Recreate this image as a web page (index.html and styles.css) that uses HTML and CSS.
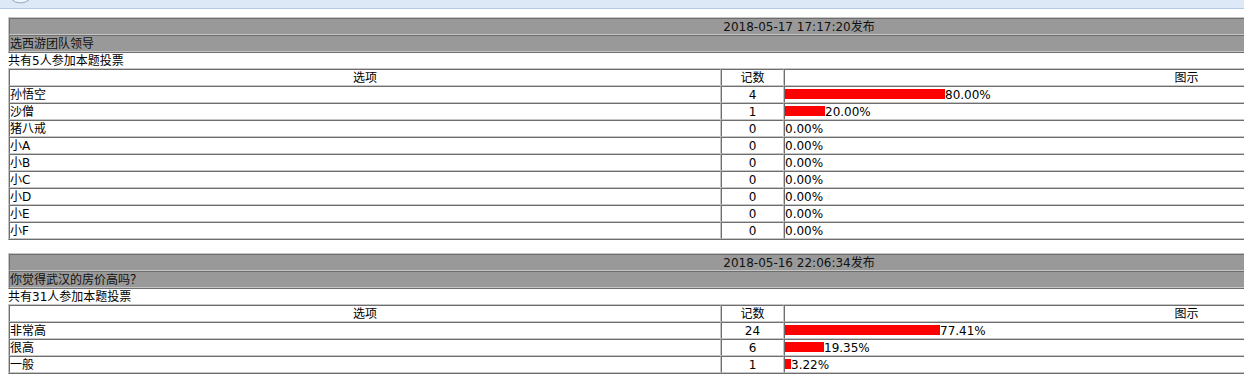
FILE: index.html
```html
<!DOCTYPE html>
<html lang="zh-CN">
<head>
<meta charset="utf-8">
<title>投票结果</title>
<link rel="stylesheet" href="styles.css">
</head>
<body>
<div class="chrome">
  <svg class="chrome-btn" width="44" height="8" viewBox="0 0 44 8" aria-hidden="true">
    <circle cx="20.5" cy="-10" r="13" fill="#eef4fb" stroke="#95a5bb" stroke-width="1"/>
  </svg>
</div>
<div class="page">
  <section class="poll">
    <div class="box">
      <div class="cell head center">2018-05-17 17:17:20发布</div>
      <div class="cell head">选西游团队领导</div>
    </div>
    <div class="total">共有5人参加本题投票</div>
    <div class="box">
      <div class="row">
        <div class="cell center">选项</div>
        <div class="cell center">记数</div>
        <div class="cell center">图示</div>
      </div>
      <div class="row">
        <div class="cell">孙悟空</div>
        <div class="cell center">4</div>
        <div class="cell bar-cell"><span class="bar" style="width:160px"></span><span>80.00%</span></div>
      </div>
      <div class="row">
        <div class="cell">沙僧</div>
        <div class="cell center">1</div>
        <div class="cell bar-cell"><span class="bar" style="width:40px"></span><span>20.00%</span></div>
      </div>
      <div class="row">
        <div class="cell">猪八戒</div>
        <div class="cell center">0</div>
        <div class="cell bar-cell"><span class="bar" style="width:0px"></span><span>0.00%</span></div>
      </div>
      <div class="row">
        <div class="cell">小A</div>
        <div class="cell center">0</div>
        <div class="cell bar-cell"><span class="bar" style="width:0px"></span><span>0.00%</span></div>
      </div>
      <div class="row">
        <div class="cell">小B</div>
        <div class="cell center">0</div>
        <div class="cell bar-cell"><span class="bar" style="width:0px"></span><span>0.00%</span></div>
      </div>
      <div class="row">
        <div class="cell">小C</div>
        <div class="cell center">0</div>
        <div class="cell bar-cell"><span class="bar" style="width:0px"></span><span>0.00%</span></div>
      </div>
      <div class="row">
        <div class="cell">小D</div>
        <div class="cell center">0</div>
        <div class="cell bar-cell"><span class="bar" style="width:0px"></span><span>0.00%</span></div>
      </div>
      <div class="row">
        <div class="cell">小E</div>
        <div class="cell center">0</div>
        <div class="cell bar-cell"><span class="bar" style="width:0px"></span><span>0.00%</span></div>
      </div>
      <div class="row">
        <div class="cell">小F</div>
        <div class="cell center">0</div>
        <div class="cell bar-cell"><span class="bar" style="width:0px"></span><span>0.00%</span></div>
      </div>
    </div>
  </section>

  <section class="poll">
    <div class="box">
      <div class="cell head center">2018-05-16 22:06:34发布</div>
      <div class="cell head">你觉得武汉的房价高吗？</div>
    </div>
    <div class="total">共有31人参加本题投票</div>
    <div class="box">
      <div class="row">
        <div class="cell center">选项</div>
        <div class="cell center">记数</div>
        <div class="cell center">图示</div>
      </div>
      <div class="row">
        <div class="cell">非常高</div>
        <div class="cell center">24</div>
        <div class="cell bar-cell"><span class="bar" style="width:155px"></span><span>77.41%</span></div>
      </div>
      <div class="row">
        <div class="cell">很高</div>
        <div class="cell center">6</div>
        <div class="cell bar-cell"><span class="bar" style="width:39px"></span><span>19.35%</span></div>
      </div>
      <div class="row">
        <div class="cell">一般</div>
        <div class="cell center">1</div>
        <div class="cell bar-cell"><span class="bar" style="width:6px"></span><span>3.22%</span></div>
      </div>
    </div>
  </section>
</div>
</body>
</html>
```

FILE: styles.css
```css
html {
  overflow: hidden;
}

body {
  margin: 0;
  background: #fff;
  color: #000;
  font-family: "DejaVu Sans", "Noto Sans CJK SC", sans-serif;
  font-size: 12px;
  line-height: 15px;
}

.chrome {
  position: relative;
  height: 8px;
  background: #dde9f7;
  border-bottom: 1px solid #b4c9e6;
  overflow: hidden;
}

.chrome-btn {
  position: absolute;
  left: 0;
  top: 0;
}

.page {
  padding: 8px;
  width: 1582px;
}

.poll + .poll {
  margin-top: 13px;
}

.box {
  border: 1px solid;
  border-color: #c6c6c6 #6e6e6e #6e6e6e #c6c6c6;
}

.cell {
  border: 1px solid;
  border-color: #6e6e6e #c6c6c6 #c6c6c6 #6e6e6e;
  height: 17px;
  padding-top: 1px;
  box-sizing: border-box;
  white-space: nowrap;
  overflow: hidden;
}

.head {
  background: #999;
  color: #111;
}

.center {
  text-align: center;
}

.total {
  height: 15px;
  padding-top: 1px;
  box-sizing: border-box;
  overflow: visible;
}

.row {
  display: grid;
  grid-template-columns: 712px 63px 805px;
}

.bar-cell {
  display: flex;
  align-items: flex-start;
}

.bar {
  display: block;
  height: 10px;
  margin-top: 1px;
  background: #f00;
  flex: none;
}
```
